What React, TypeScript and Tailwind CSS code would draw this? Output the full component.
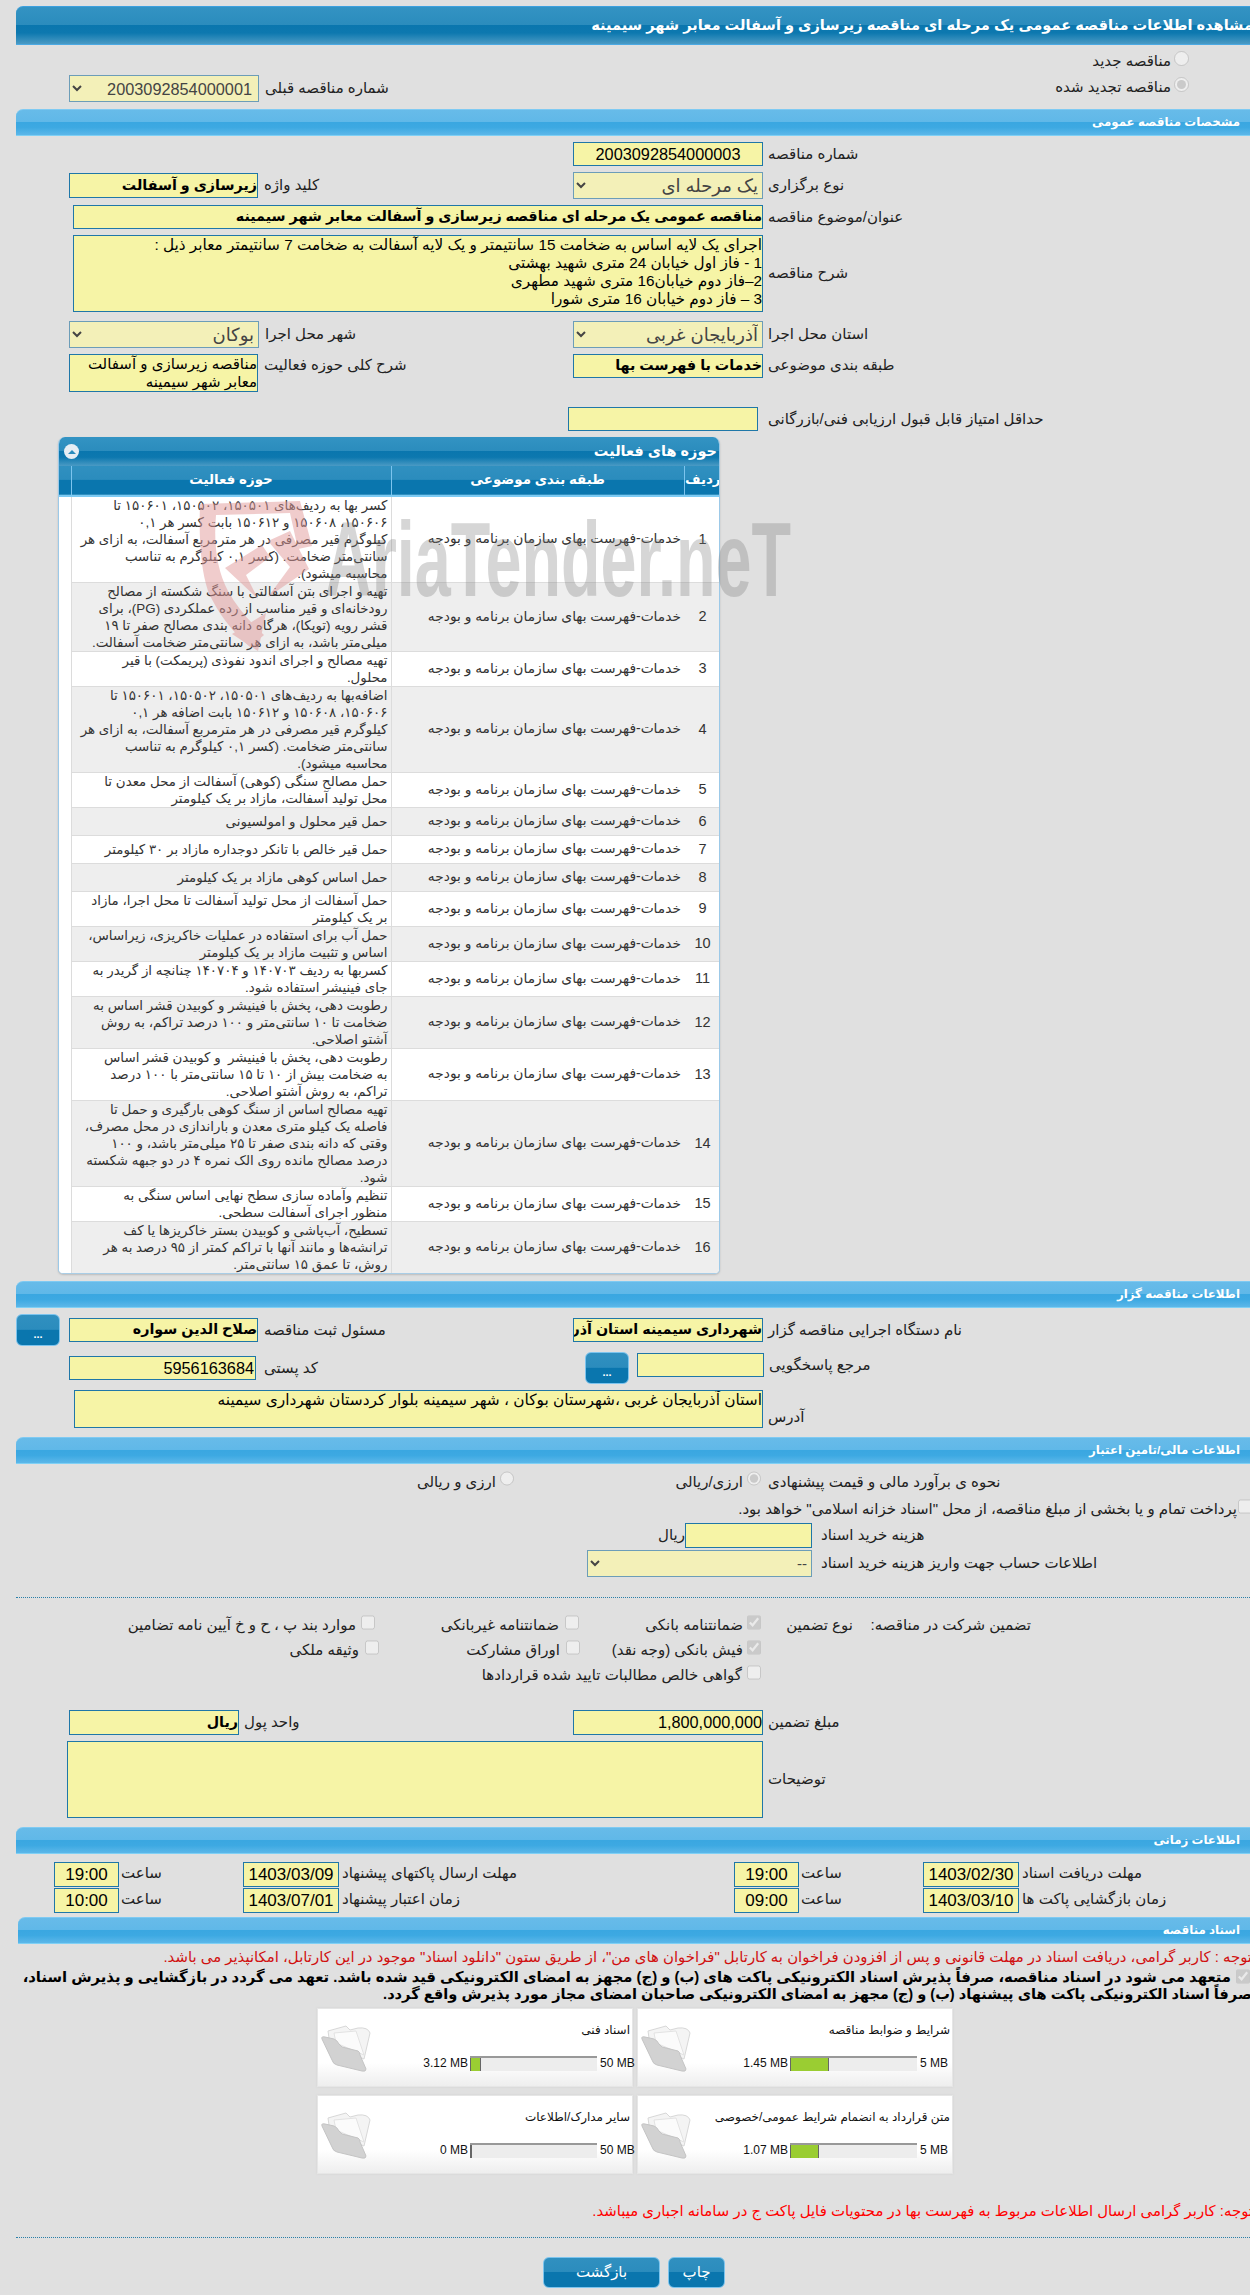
import React from "react";

const sectionBg = "bg-[linear-gradient(to_bottom,#67bbe9_0%,#60b8e8_48%,#3aa7e1_50%,#3da9e2_70%,#5cb7e9_100%)] border-t border-b border-t-[#7fcaf2] border-b-[#7fd0f5]";
const titleBg = "bg-[linear-gradient(to_bottom,#3393c3_0%,#2b8cbd_48%,#0a76ae_50%,#0d78af_70%,#4a9ac4_100%)]";
const headBg = "bg-[linear-gradient(to_bottom,#3090c0_0%,#2b8cbd_48%,#0a76ae_50%,#0a76ae_100%)]";
const inputBox = "border border-[#1f77a8] bg-[#f6f4a6] text-black overflow-hidden whitespace-nowrap";
const selectBox = "border border-[#6c9db8] bg-[#f3f0b8] text-[#444] opacity-100 outline-none";

function Section({ title, className = "" }: { title: string; className?: string }) {
  return (
    <div className={`ml-[16px] h-[27px] rounded-tl-[7px] flex items-center justify-end pr-[10px] ${sectionBg} ${className}`}>
      <span dir="rtl" className="text-white font-bold text-[11.8px]">{title}</span>
    </div>
  );
}

function Label({ children, className = "" }: { children: React.ReactNode; className?: string }) {
  return <span dir="rtl" className={`whitespace-nowrap text-[#222] text-[15px] ${className}`}>{children}</span>;
}

function TextBox({ value, className = "", bold = false, center = false }: { value?: string; className?: string; bold?: boolean; center?: boolean }) {
  return (
    <div dir="rtl" className={`${inputBox} flex items-center ${center ? "justify-center" : ""} ${bold ? "font-bold" : ""} ${className}`}>
      {value}
    </div>
  );
}

function Select({ value, className = "" }: { value: string; className?: string }) {
  return (
    <select dir="rtl" disabled defaultValue={value} className={`${selectBox} h-[27px] ${className}`}>
      <option>{value}</option>
    </select>
  );
}

const cat = "خدمات-فهرست بهای سازمان برنامه و بودجه";
const rows = [
  "کسر بها به ردیف‌های ۱۵۰۵۰۱، ۱۵۰۵۰۲، ۱۵۰۶۰۱ تا\n۱۵۰۶۰۶، ۱۵۰۶۰۸ و ۱۵۰۶۱۲ بابت کسر هر ۰,۱\nکیلوگرم قیر مصرفی در هر مترمربع آسفالت، به ازای هر\nسانتی‌متر ضخامت. (کسر ۰,۱ کیلوگرم به تناسب\nمحاسبه میشود).",
  "تهیه و اجرای بتن آسفالتی با سنگ شکسته از مصالح\nرودخانه‌ای و قیر مناسب از رده عملکردی (PG)، برای\nقشر رویه (توپکا)، هرگاه دانه بندی مصالح صفر تا ۱۹\nمیلی‌متر باشد، به ازای هر سانتی‌متر ضخامت آسفالت.",
  "تهیه مصالح و اجرای اندود نفوذی (پریمکت) با قیر\nمحلول.",
  "اضافه‌بها به ردیف‌های ۱۵۰۵۰۱، ۱۵۰۵۰۲، ۱۵۰۶۰۱ تا\n۱۵۰۶۰۶، ۱۵۰۶۰۸ و ۱۵۰۶۱۲ بابت اضافه هر ۰,۱\nکیلوگرم قیر مصرفی در هر مترمربع آسفالت، به ازای هر\nسانتی‌متر ضخامت. (کسر ۰,۱ کیلوگرم به تناسب\nمحاسبه میشود).",
  "حمل مصالح سنگی (کوهی) آسفالت از محل معدن تا\nمحل تولید آسفالت، مازاد بر یک کیلومتر",
  "حمل قیر محلول و امولسیونی",
  "حمل قیر خالص با تانکر دوجداره مازاد بر ۳۰ کیلومتر",
  "حمل اساس کوهی مازاد بر یک کیلومتر",
  "حمل آسفالت از محل تولید آسفالت تا محل اجرا، مازاد\nبر یک کیلومتر",
  "حمل آب برای استفاده در عملیات خاکریزی، زیراساس،\nاساس و تثبیت مازاد بر یک کیلومتر",
  "کسربها به ردیف ۱۴۰۷۰۳ و ۱۴۰۷۰۴ چنانچه از گریدر به\nجای فینیشر استفاده شود.",
  "رطوبت دهی، پخش با فینیشر و کوبیدن قشر اساس به\nضخامت تا ۱۰ سانتی‌متر و ۱۰۰ درصد تراکم، به روش\nآشتو اصلاحی.",
  "رطوبت دهی، پخش با فینیشر  و کوبیدن قشر اساس\nبه ضخامت بیش از ۱۰ تا ۱۵ سانتی‌متر با ۱۰۰ درصد\nتراکم، به روش آشتو اصلاحی.",
  "تهیه مصالح اساس از سنگ کوهی بارگیری و حمل تا\nفاصله یک کیلو متری معدن و باراندازی در محل مصرف،\nوقتی که دانه بندی صفر تا ۲۵ میلی‌متر باشد، و ۱۰۰\nدرصد مصالح مانده روی الک نمره ۴ در دو جبهه شکسته\nشود.",
  "تنظیم وآماده سازی سطح نهایی اساس سنگی به\nمنظور اجرای آسفالت سطحی.",
  "تسطیح، آب‌پاشی و کوبیدن بستر خاکریزها یا کف\nترانشه‌ها و مانند آنها با تراکم کمتر از ۹۵ درصد به هر\nروش، تا عمق ۱۵ سانتی‌متر.",
];

function Folder() {
  return (
    <svg viewBox="0 0 54 48" className="w-[54px] h-[48px] shrink-0">
      <path d="M8 6 L26 1 L30 5 L38 3 Q48 2 50 8 L44 34 L10 20 Z" fill="#f4f4f4" stroke="#d8d8d8" />
      <path d="M14 8 L36 6 L44 30 L16 18 Z" fill="#fbfbfb" stroke="#e3e3e3" />
      <path d="M2 14 Q1 11 5 12 L14 14 Q17 15 19 19 L22 22 L38 26 Q40 27 40 30 L46 44 Q46 47 42 46 L17 40 Q13 39 12 35 Z" fill="#d2d2d2" stroke="#c4c4c4" />
    </svg>
  );
}

function FileCard({ title, max, used, fill }: { title: string; max: string; used: string; fill: string }) {
  return (
    <div className="w-[316px] h-[79px] bg-[linear-gradient(to_bottom,#ffffff_0%,#ffffff_70%,#eeeeee_100%)] border border-[#e6e6e6] flex items-start pl-[2px] pt-[16px] shadow-[0_0_2px_#d0d0d0]">
      <Folder />
      <div className="flex-1 flex flex-col items-end pr-[2px] -mt-[3px]">
        <span dir="rtl" className="text-[12px] text-[#111] whitespace-nowrap h-[17px] leading-[17px]">{title}</span>
        <div className="flex items-center mt-[15px] text-[12px] text-[#111]">
          <span className="whitespace-nowrap mr-[2px]">{used}</span>
          <div className="w-[127px] h-[15px] bg-[#ededed] border-t-2 border-[#999] flex">
            <div className={`h-full bg-[#9acd32] border-x border-[#666] ${fill}`} />
          </div>
          <span className="whitespace-nowrap w-[33px] pl-[3px]">{max}</span>
        </div>
      </div>
    </div>
  );
}

function Check({ checked = false }: { checked?: boolean }) {
  return <input type="checkbox" disabled defaultChecked={checked} className="w-[14px] h-[15px] m-0 shrink-0" />;
}

function DateRow({ a, t1, la, b, t2, lb, className = "" }: { a: string; t1: string; la: string; b: string; t2: string; lb: string; className?: string }) {
  const box = `${inputBox} h-full flex items-center justify-center text-[17px]`;
  return (
    <div className={`flex h-[25px] pl-[54px] ${className}`}>
      <div className="flex w-[189px]"><div className={`${box} w-[65px]`}>{t2}</div><Label className="ml-[2px]">ساعت</Label></div>
      <div className="flex w-[491px]"><div className={`${box} w-[96px]`}>{b}</div><Label className="ml-[3px]">{lb}</Label></div>
      <div className="flex w-[189px]"><div className={`${box} w-[65px]`}>{t1}</div><Label className="ml-[2px]">ساعت</Label></div>
      <div className="flex"><div className={`${box} w-[96px]`}>{a}</div><Label className="ml-[3px]">{la}</Label></div>
    </div>
  );
}

export default function App() {
  return (
    <div className="w-[1250px] h-[2295px] overflow-hidden bg-[#e0e0e0] text-[15px] text-black font-['Liberation_Sans','DejaVu_Sans',sans-serif]">
      <div className="h-[6px]" />
      {/* title */}
      <div className={`ml-[16px] h-[39px] rounded-tl-[7px] border-t border-t-[#3da0de] border-b border-b-[#4ba9e3] flex items-center justify-end ${titleBg}`}>
        <span dir="rtl" className="text-white font-bold text-[14.6px] whitespace-nowrap -mr-[3px]">مشاهده اطلاعات مناقصه عمومی یک مرحله ای مناقصه زیرسازی و آسفالت معابر شهر سیمینه</span>
      </div>

      <div className="flex justify-end items-center gap-[3px] h-[29px] mt-[2px] pr-[61px]">
        <Label>مناقصه جدید</Label>
        <input type="radio" disabled className="w-[15px] h-[15px] m-0 -mt-[6px]" />
      </div>
      <div className="flex h-[33px] items-start">
        <div className="pl-[69px] flex items-center mt-[-1px]">
          <Select value="2003092854000001" className="w-[190px] text-[16.3px] pr-[2px]" />
          <Label className="ml-[6px]">شماره مناقصه قبلی</Label>
        </div>
        <div className="flex-1 flex justify-end items-center gap-[3px] pr-[61px] h-[26px] -mt-[2px]">
          <Label>مناقصه تجدید شده</Label>
          <input type="radio" disabled defaultChecked className="w-[15px] h-[15px] m-0 -mt-[6px]" />
        </div>
      </div>

      <Section title="مشخصات مناقصه عمومی" />

      <div className="mt-[6px] pl-[573px] flex items-center h-[24px]">
        <TextBox value="2003092854000003" center className="w-[190px] h-full text-[16.3px]" />
        <Label className="ml-[5px]">شماره مناقصه</Label>
      </div>

      <div className="mt-[6px] flex pl-[69px] h-[27px]">
        <div className="w-[504px] flex items-center">
          <TextBox value="زیرسازی و آسفالت" bold className="w-[189px] h-[25px] text-[14.3px]" />
          <Label className="ml-[6px]">کلید واژه</Label>
        </div>
        <div className="flex items-center">
          <Select value="یک مرحله ای" className="w-[190px] text-[18px]" />
          <Label className="ml-[5px]">نوع برگزاری</Label>
        </div>
      </div>

      <div className="mt-[6px] flex pl-[73px] h-[24px] items-center">
        <TextBox value="مناقصه عمومی یک مرحله ای مناقصه زیرسازی و آسفالت معابر شهر سیمینه" bold className="w-[690px] h-full text-[14.3px]" />
        <Label className="ml-[5px]">عنوان/موضوع مناقصه</Label>
      </div>

      <div className="mt-[6px] flex pl-[73px] h-[77px] items-center">
        <div dir="rtl" className={`${inputBox} w-[690px] h-full text-[15.3px] leading-[18px] whitespace-pre text-[#222]`}>
          {"اجرای یک لایه اساس به ضخامت 15 سانتیمتر و یک لایه آسفالت به ضخامت 7 سانتیمتر معابر ذیل :\n1 - فاز اول خیابان 24 متری شهید بهشتی\n2–فاز دوم خیابان16 متری شهید مطهری\n3 – فاز دوم خیابان 16 متری شورا"}
        </div>
        <Label className="ml-[5px]">شرح مناقصه</Label>
      </div>

      <div className="mt-[9px] flex pl-[69px] h-[27px]">
        <div className="w-[504px] flex items-center">
          <Select value="بوکان" className="w-[190px] text-[18px]" />
          <Label className="ml-[6px]">شهر محل اجرا</Label>
        </div>
        <div className="flex items-center">
          <Select value="آذربایجان غربی" className="w-[190px] text-[18px]" />
          <Label className="ml-[5px]">استان محل اجرا</Label>
        </div>
      </div>

      <div className="mt-[6px] flex pl-[69px] h-[38px] items-start">
        <div className="w-[504px] flex items-start">
          <div dir="rtl" className={`${inputBox} w-[189px] h-[38px] text-[15px] leading-[18px] whitespace-pre text-[#222]`}>
            {"مناقصه زیرسازی و آسفالت\nمعابر شهر سیمینه"}
          </div>
          <Label className="ml-[6px]">شرح کلی حوزه فعالیت</Label>
        </div>
        <div className="flex items-start">
          <TextBox value="خدمات با فهرست بها" bold className="w-[190px] h-[24px] text-[14.3px]" />
          <Label className="ml-[5px]">طبقه بندی موضوعی</Label>
        </div>
      </div>

      <div className="mt-[15px] pl-[568px] flex items-center h-[24px]">
        <TextBox className="w-[190px] h-full" />
        <Label className="ml-[10px]">حداقل امتیاز قابل قبول ارزیابی فنی/بازرگانی</Label>
      </div>

      {/* table */}
      <div className="relative mt-[6px] ml-[58px] w-[662px] h-[837px]">
        <div className="w-full h-full rounded-t-[7px] rounded-b-[5px] bg-white border-x border-b border-x-[#9cc9e8] border-b-[#a9cde6] shadow-[0_1px_2px_#bbb] overflow-hidden">
          <div className={`h-[29px] flex items-center justify-between pl-[5px] pr-[2px] ${titleBg}`}>
            <span className="w-[15px] h-[15px] rounded-full bg-[#e6eef4] flex items-center justify-center">
              <span className="w-0 h-0 border-x-[4px] border-x-transparent border-b-[4px] border-b-[#2b8cbd]" />
            </span>
            <span dir="rtl" className="text-white font-bold text-[14.5px]">حوزه های فعالیت</span>
          </div>
          <table className="w-full table-fixed border-collapse text-[13.4px] text-[#333]">
            <colgroup>
              <col className="w-[12px]" />
              <col className="w-[320px]" />
              <col className="w-[293px]" />
              <col className="w-[37px]" />
            </colgroup>
            <thead>
              <tr className={`h-[30px] ${headBg} text-white text-[13.4px] font-bold border-b-2 border-b-[#7ccaf3]`}>
                <th className="border-r border-r-[#7cc4ee]" />
                <th dir="rtl" className="border-r border-r-[#7cc4ee] text-center">حوزه فعالیت</th>
                <th dir="rtl" className="border-r border-r-[#7cc4ee] text-center">طبقه بندی موضوعی</th>
                <th dir="rtl" className="text-center">ردیف</th>
              </tr>
            </thead>
            <tbody>
              {rows.map((r, i) => (
                <tr key={i} className="h-[28px]">
                  <td className="bg-white" />
                  <td dir="rtl" className={`border-b border-b-[#dcdcdc] border-l border-l-[#dcdcdc] pr-[3px] whitespace-pre text-right leading-[17px] ${i % 2 ? "bg-[#eeeeee]" : "bg-white"}`}>{r}</td>
                  <td dir="rtl" className={`border-b border-b-[#dcdcdc] border-l border-l-[#dcdcdc] pr-[3px] whitespace-nowrap text-right text-[13.8px] ${i % 2 ? "bg-[#eeeeee]" : "bg-white"}`}>{cat}</td>
                  <td className={`border-b border-b-[#dcdcdc] text-center text-[14.5px] ${i % 2 ? "bg-[#eeeeee]" : "bg-white"}`}>{i + 1}</td>
                </tr>
              ))}
            </tbody>
          </table>
        </div>
        {/* watermark, lying over the table */}
        <div className="absolute left-[137px] top-[59px] w-[620px] h-[160px] pointer-events-none">
          <svg viewBox="195 495 130 160" className="absolute left-0 top-0 w-[130px] h-[160px]">
            <g fill="#e29a9a" opacity="0.5">
              <path d="M200 503 L300 500 L312 545 L298 548 L290 512 L216 514 Q212 560 228 590 Q240 612 264 634 L250 646 Q222 622 208 590 Q198 560 200 503 Z" />
              <path d="M225 567 L262 544 L270 556 L246 574 L258 598 Z" />
              <path d="M268 540 L290 530 L309 568 L268 596 L290 566 Z" />
              <path d="M232 633 L266 612 L258 650 Z" />
            </g>
          </svg>
          <span className="absolute left-[130px] top-[8px] font-['Liberation_Sans'] font-bold text-[106px] leading-[110px] text-[#7a7a7a] opacity-30 whitespace-nowrap origin-left scale-x-[0.61]">AriaTender.neT</span>
        </div>
      </div>

      <Section title="اطلاعات مناقصه گزار" className="mt-[7px]" />

      <div className="mt-[6px] flex pl-[16px] h-[32px]">
        <button className={`w-[44px] h-[32px] rounded-[6px] border border-[#7cc4ee] text-white text-[11px] font-bold pt-[8px] ${headBg}`}>...</button>
        <div className="ml-[9px] w-[504px] flex items-center h-[24px] mt-[4px]">
          <TextBox value="صلاح الدین سواره" bold className="w-[189px] h-full text-[14.3px]" />
          <Label className="ml-[6px]">مسئول ثبت مناقصه</Label>
        </div>
        <div className="flex items-center h-[24px] mt-[4px]">
          <TextBox value="شهرداری سیمینه استان آذربایجان غربی" bold className="w-[190px] h-full text-[14.3px]" />
          <Label className="ml-[5px]">نام دستگاه اجرایی مناقصه گزار</Label>
        </div>
      </div>

      <div className="mt-[6px] flex pl-[69px] h-[32px]">
        <div className="w-[516px] flex items-center h-[24px] mt-[4px]">
          <TextBox value="5956163684" className="w-[187px] h-full text-[16.3px] pr-[1px]" />
          <Label className="ml-[8px]">کد پستی</Label>
        </div>
        <button className={`w-[44px] h-[32px] rounded-[6px] border border-[#7cc4ee] text-white text-[11px] font-bold pt-[8px] ${headBg}`}>...</button>
        <div className="ml-[8px] flex items-center h-[24px] mt-[1px]">
          <TextBox className="w-[127px] h-full" />
          <Label className="ml-[5px]">مرجع پاسخگویی</Label>
        </div>
      </div>

      <div className="mt-[6px] flex pl-[74px] h-[38px] items-end">
        <div dir="rtl" className={`${inputBox} w-[689px] h-full text-[15.4px] leading-[18px] text-[#222]`}>استان آذربایجان غربی ،شهرستان بوکان ، شهر سیمینه بلوار کردستان شهرداری سیمینه</div>
        <Label className="ml-[5px]">آدرس</Label>
      </div>

      <Section title="اطلاعات مالی/تامین اعتبار" className="mt-[9px]" />

      <div className="mt-[6px] flex h-[24px] items-center pl-[420px]">
        <Label className="w-[76px] text-right">ارزی و ریالی</Label>
        <input type="radio" disabled className="w-[14px] h-[15px] m-0 ml-[4px] -mt-[8px]" />
        <Label className="ml-[163px] w-[66px] text-right">ارزی/ریالی</Label>
        <input type="radio" disabled defaultChecked className="w-[14px] h-[15px] m-0 ml-[4px] -mt-[8px]" />
        <Label className="ml-[7px]">نحوه ی برآورد مالی و قیمت پیشنهادی</Label>
      </div>

      <div className="mt-[2px] flex h-[26px] justify-end items-center">
        <Label>پرداخت تمام و یا بخشی از مبلغ مناقصه، از محل "اسناد خزانه اسلامی" خواهد بود.</Label>
        <input type="checkbox" disabled className="w-[14px] h-[15px] m-0 ml-[1px] -mt-[6px] -mr-[2px]" />
      </div>

      <div className="mt-[1px] flex h-[25px] items-center pl-[662px]">
        <Label className="w-[23px] text-left">ریال</Label>
        <TextBox className="w-[127px] h-full" />
        <Label className="ml-[9px]">هزینه خرید اسناد</Label>
      </div>

      <div className="mt-[2px] flex h-[26px] items-center pl-[587px]">
        <Select value="--" className="w-[225px] h-[26px] text-[15px]" />
        <Label className="ml-[9px]">اطلاعات حساب جهت واریز هزینه خرید اسناد</Label>
      </div>

      <div className="mt-[21px] ml-[16px] border-t border-dotted border-t-[#2a7fa8]" />

      <div className="mt-[20px] flex h-[15px] items-center pl-[130px]">
        <Label className="w-[226px] text-right">موارد بند پ ، ح و خ آیین نامه تضامین</Label>
        <span className="ml-[5px]"><Check /></span>
        <Label className="w-[184px] text-right">ضمانتنامه غیربانکی</Label>
        <span className="ml-[6px]"><Check /></span>
        <Label className="w-[164px] text-right">ضمانتنامه بانکی</Label>
        <span className="ml-[4px]"><Check checked /></span>
        <Label className="w-[92px] text-right">نوع تضمین</Label>
        <Label className="ml-[20px] w-[158px] text-right">تضمین شرکت در مناقصه:</Label>
      </div>

      <div className="mt-[10px] flex h-[15px] items-center pl-[287px]">
        <Label className="w-[72px] text-right">وثیقه ملکی</Label>
        <span className="ml-[6px]"><Check /></span>
        <Label className="w-[181px] text-right">اوراق مشارکت</Label>
        <span className="ml-[6px]"><Check /></span>
        <Label className="w-[163px] text-right">فیش بانکی (وجه نقد)</Label>
        <span className="ml-[4px]"><Check checked /></span>
      </div>

      <div className="mt-[10px] flex h-[15px] items-center pl-[482px]">
        <Label className="w-[260px] text-right">گواهی خالص مطالبات تایید شده قراردادها</Label>
        <span className="ml-[5px]"><Check /></span>
      </div>

      <div className="mt-[27px] flex pl-[69px] h-[25px]">
        <div className="w-[504px] flex items-center">
          <TextBox value="ریال" bold className="w-[170px] h-full text-[14.3px]" />
          <Label className="ml-[5px]">واحد پول</Label>
        </div>
        <div className="flex items-center">
          <TextBox value="1,800,000,000" className="w-[190px] h-full text-[16.3px]" />
          <Label className="ml-[5px]">مبلغ تضمین</Label>
        </div>
      </div>

      <div className="mt-[6px] flex pl-[67px] h-[77px] items-center">
        <TextBox className="w-[696px] h-full" />
        <Label className="ml-[5px]">توضیحات</Label>
      </div>

      <Section title="اطلاعات زمانی" className="mt-[9px]" />

      <DateRow className="mt-[8px]" a="1403/02/30" t1="19:00" la="مهلت دریافت اسناد" b="1403/03/09" t2="19:00" lb="مهلت ارسال پاکتهای پیشنهاد" />
      <DateRow className="mt-[1px]" a="1403/03/10" t1="09:00" la="زمان بازگشایی پاکت ها" b="1403/07/01" t2="10:00" lb="زمان اعتبار پیشنهاد" />

      <div className="mt-[4px] ml-[2px]"><Section title="اسناد مناقصه" /></div>

      <div className="mt-[4px] flex justify-end h-[18px] items-center">
        <span dir="rtl" className="whitespace-nowrap text-[#d01010] text-[14.9px] -mr-[2px]">توجه : کاربر گرامی، دریافت اسناد در مهلت قانونی و پس از افزودن فراخوان به کارتابل "فراخوان های من"، از طریق ستون "دانلود اسناد" موجود در این کارتابل، امکانپذیر می باشد.</span>
      </div>
      <div className="mt-[3px] relative h-[34px]">
        <div className="flex justify-end items-center h-[17px]">
          <span dir="rtl" className="whitespace-nowrap font-bold text-black text-[14.8px] mr-[19px]">متعهد می شود در اسناد مناقصه، صرفاً پذیرش اسناد الکترونیکی پاکت های (ب) و (ج) مجهز به امضای الکترونیکی قید شده باشد. تعهد می گردد در بازگشایی و پذیرش اسناد،</span>
          <input type="checkbox" disabled defaultChecked className="absolute right-0 top-0 w-[14px] h-[15px] m-0" />
        </div>
        <div className="flex justify-end items-center h-[17px]">
          <span dir="rtl" className="whitespace-nowrap font-bold text-black text-[14.6px] -mr-[2px]">صرفاً اسناد الکترونیکی پاکت های پیشنهاد (ب) و (ج) مجهز به امضای الکترونیکی صاحبان امضای مجاز مورد پذیرش واقع گردد.</span>
        </div>
      </div>

      <div className="mt-[5px] pl-[317px] flex gap-[4px]">
        <FileCard title="اسناد فنی" max="50 MB" used="3.12 MB" fill="w-[11px]" />
        <FileCard title="شرایط و ضوابط مناقصه" max="5 MB" used="1.45 MB" fill="w-[39px]" />
      </div>
      <div className="mt-[8px] pl-[317px] flex gap-[4px]">
        <FileCard title="سایر مدارک/اطلاعات" max="50 MB" used="0 MB" fill="w-[1px]" />
        <FileCard title="متن قرارداد به انضمام شرایط عمومی/خصوصی" max="5 MB" used="1.07 MB" fill="w-[29px]" />
      </div>

      <div className="mt-[28px] flex justify-end h-[18px] items-center">
        <span dir="rtl" className="whitespace-nowrap text-[#ff0000] text-[14.9px] -mr-[3px]">توجه: کاربر گرامی ارسال اطلاعات مربوط به فهرست بها در محتویات فایل پاکت ج در سامانه اجباری میباشد.</span>
      </div>

      <div className="mt-[17px] ml-[16px] border-t border-dotted border-t-[#2a7fa8]" />

      <div className="mt-[19px] pl-[543px] flex gap-[8px]">
        <button dir="rtl" className={`w-[117px] h-[31px] rounded-[6px] border border-[#7cc4ee] text-white text-[15px] ${headBg}`}>بازگشت</button>
        <button dir="rtl" className={`w-[57px] h-[31px] rounded-[6px] border border-[#7cc4ee] text-white text-[15px] ${headBg}`}>چاپ</button>
      </div>
    </div>
  );
}
